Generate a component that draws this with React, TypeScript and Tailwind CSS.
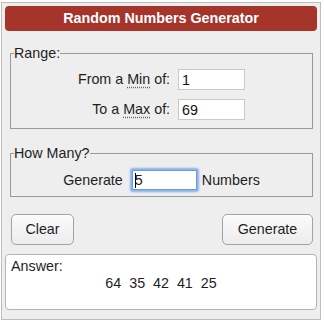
import React from 'react'

function NumInput({ value }: { value: string }) {
  return (
    <input
      readOnly
      value={value}
      className="w-[67px] h-[21px] border border-[#c9c9c9] bg-white pl-[3px] outline-none text-[#111]"
    />
  )
}

function App() {
  return (
    <div className="w-[324px] h-[324px] bg-white pt-[2px] pl-[1px] font-['Liberation_Sans',Arial,sans-serif] text-[14.3px] leading-[17px] text-[#1e1e1e]">
      <div className="w-[320px] h-[318px] border border-[#bdbdbd] bg-[#eeeeee] p-[3px] flex flex-col">
        {/* title bar */}
        <div className="h-[25px] rounded-[4px] bg-[#a5342b] text-white font-bold flex items-center justify-center">
          Random Numbers Generator
        </div>

        {/* range */}
        <fieldset className="mt-[14px] ml-[5px] mr-[4px] border border-[#9a9a9a] px-[3px] pb-[8px]">
          <legend>Range:</legend>
          <div className="mt-[7px] grid grid-cols-[auto_auto] justify-center items-center gap-x-[8px] gap-y-[9px]">
            <span className="text-right">
              From a <abbr className="no-underline underline decoration-dotted decoration-[#666] underline-offset-[3px]">Min</abbr> of:
            </span>
            <NumInput value="1" />
            <span className="text-right">
              To a <abbr className="no-underline underline decoration-dotted decoration-[#666] underline-offset-[3px]">Max</abbr> of:
            </span>
            <NumInput value="69" />
          </div>
        </fieldset>

        {/* how many */}
        <fieldset className="mt-[16px] ml-[5px] mr-[4px] border border-[#9a9a9a] px-[3px] pb-[6px]">
          <legend>How Many?</legend>
          <div className="mt-[8px] flex items-center justify-center">
            <span>Generate</span>
            <div className="ml-[9px] mr-[5px] w-[65px] h-[20px] border border-[#6e9ad8] bg-white rounded-[1px] shadow-[0_0_2px_2px_#86b0ee] flex items-center pl-[2px]">
              <span className="w-px h-[15px] bg-black -mr-px" />
              <span>5</span>
            </div>
            <span>Numbers</span>
          </div>
        </fieldset>

        {/* buttons */}
        <div className="mt-[17px] ml-[6px] mr-[4px] flex justify-between">
          <button className="w-[63px] h-[31px] rounded-[5px] border border-[#a3a3a3] bg-gradient-to-b from-[#fbfbfb] to-[#ececec]">
            Clear
          </button>
          <button className="w-[91px] h-[31px] rounded-[5px] border border-[#a3a3a3] bg-gradient-to-b from-[#fbfbfb] to-[#ececec]">
            Generate
          </button>
        </div>

        {/* answer */}
        <div className="mt-[9px] h-[56px] rounded-[4px] border border-[#b3b3b3] bg-white pt-[3px] pl-[5px]">
          <div>Answer:</div>
          <div className="text-center pr-[5px]">64&nbsp;&nbsp;35&nbsp;&nbsp;42&nbsp;&nbsp;41&nbsp;&nbsp;25</div>
        </div>
      </div>
    </div>
  )
}

export default App
